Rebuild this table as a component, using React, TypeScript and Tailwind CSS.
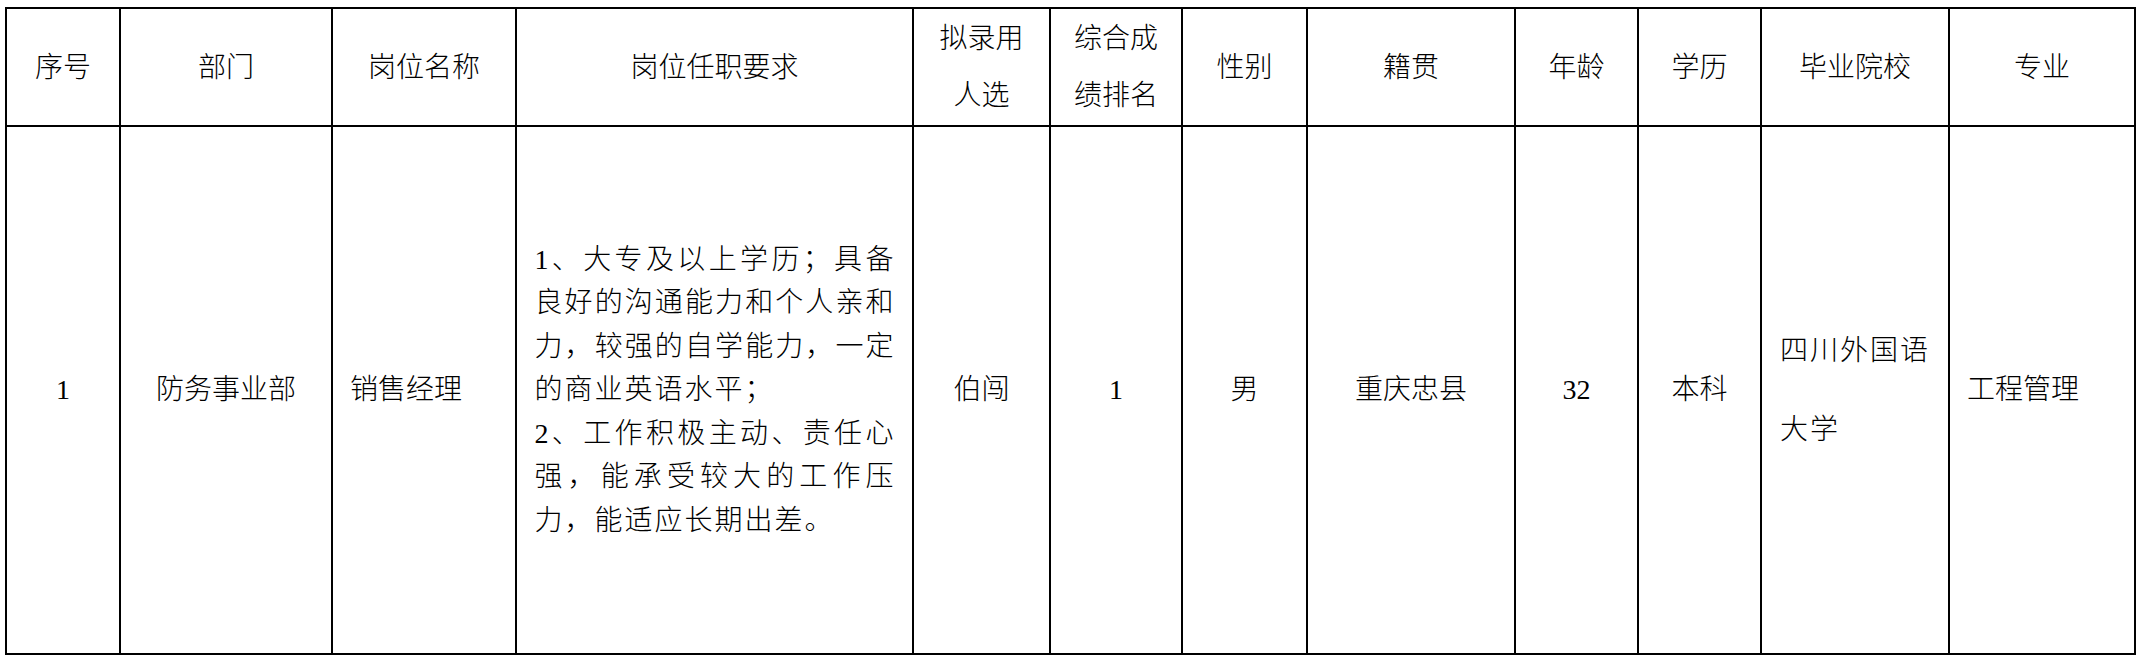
import React from "react";

const font = { fontFamily: '"Liberation Serif", "Noto Sans CJK SC", serif' };

function H({ children }: { children: React.ReactNode }) {
  return (
    <div className="bg-white flex items-center justify-center text-center text-[28px] leading-[57px] text-black font-light">
      {children}
    </div>
  );
}

function C({ children, left = false }: { children: React.ReactNode; left?: boolean }) {
  return (
    <div
      className={
        left
          ? "bg-white flex items-center justify-start pl-[17px] text-[28px] leading-[40px] text-black font-light"
          : "bg-white flex items-center justify-center text-center text-[28px] leading-[40px] text-black font-light"
      }
    >
      {children}
    </div>
  );
}

const reqLines: { t: string; full: boolean }[] = [
  { t: "1、大专及以上学历；具备", full: true },
  { t: "良好的沟通能力和个人亲和", full: true },
  { t: "力，较强的自学能力，一定", full: true },
  { t: "的商业英语水平；", full: false },
  { t: "2、工作积极主动、责任心", full: true },
  { t: "强，能承受较大的工作压", full: true },
  { t: "力，能适应长期出差。", full: false },
];

export default function App() {
  return (
    <div className="w-[2147px] h-[667px] bg-white overflow-hidden" style={font}>
      <div className="ml-[5px] mt-[7px] inline-grid bg-black p-[2px] gap-[2px] grid-cols-[112px_210px_182px_395px_135px_130px_123px_206px_121px_121px_186px_184px] grid-rows-[116px_526px]">
        <H>序号</H>
        <H>部门</H>
        <H>岗位名称</H>
        <H>岗位任职要求</H>
        <H>
          <div>
            <div>拟录用</div>
            <div>人选</div>
          </div>
        </H>
        <H>
          <div>
            <div>综合成</div>
            <div>绩排名</div>
          </div>
        </H>
        <H>性别</H>
        <H>籍贯</H>
        <H>年龄</H>
        <H>学历</H>
        <H>毕业院校</H>
        <H>专业</H>

        <C>1</C>
        <C>防务事业部</C>
        <C left>销售经理</C>
        <div className="bg-white flex items-center justify-center">
          <div className="w-[360px] text-[28px] leading-[43.5px] text-black tracking-[1px] font-light">
            {reqLines.map((l, i) => (
              <div
                key={i}
                className={
                  l.full
                    ? "whitespace-nowrap text-justify [text-align-last:justify] [text-justify:inter-character]"
                    : "whitespace-nowrap text-left tracking-[2px]"
                }
              >
                {l.t}
              </div>
            ))}
          </div>
        </div>
        <C>伯闯</C>
        <C>1</C>
        <C>男</C>
        <C>重庆忠县</C>
        <C>32</C>
        <C>本科</C>
        <div className="bg-white flex items-center justify-start pl-[18px] text-[28px] leading-[79px] tracking-[2px] text-black font-light">
          <div>
            <div>四川外国语</div>
            <div>大学</div>
          </div>
        </div>
        <C left>工程管理</C>
      </div>
    </div>
  );
}
